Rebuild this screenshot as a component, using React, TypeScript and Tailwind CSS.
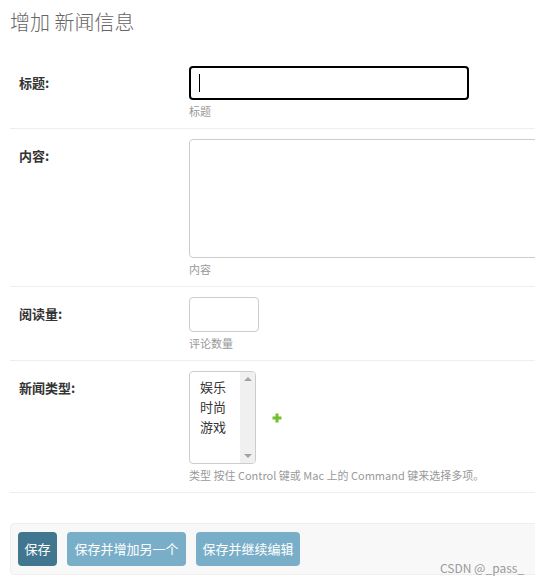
import React from 'react';

const font = { fontFamily: '"Noto Sans CJK SC", "Noto Sans", sans-serif' };

function Row({
  label,
  help,
  children,
}: {
  label: string;
  help: string;
  children: React.ReactNode;
}) {
  return (
    <div className="flex border-b border-[#eeeeee] py-[10px] pl-[9px]">
      <div className="w-[170px] shrink-0 pt-[9px] text-[13px] font-bold leading-[16px] text-[#333333]">
        {label}
      </div>
      <div className="flex flex-col">
        {children}
        <div className="mt-[4px] text-[11px] leading-[14px] text-[#999999]">{help}</div>
      </div>
    </div>
  );
}

function PlusIcon() {
  return (
    <svg width="10" height="10" viewBox="0 0 10 10">
      <path d="M5 0.5v9M0.5 5h9" stroke="#70bf2b" strokeWidth="3" />
    </svg>
  );
}

export default function App() {
  const options = ['娱乐', '时尚', '游戏'];

  return (
    <div className="relative h-[584px] w-[535px] overflow-hidden bg-white" style={font}>
      <h1 className="pl-[10px] pt-[10px] text-[20px] font-light leading-[24px] text-[#666666]">
        增加 新闻信息
      </h1>

      <div className="ml-[10px] mt-[22px] w-[700px]">
        <Row label="标题:" help="标题">
          <div className="flex h-[34px] w-[280px] items-center rounded-[4px] border-2 border-black bg-white pl-[8px]">
            <div className="h-[18px] w-px bg-black" />
          </div>
        </Row>

        <Row label="内容:" help="内容">
          <div className="h-[119px] w-[610px] rounded-[4px] border border-[#cccccc] bg-white" />
        </Row>

        <Row label="阅读量:" help="评论数量">
          <div className="h-[35px] w-[70px] rounded-[4px] border border-[#cccccc] bg-white" />
        </Row>

        <Row label="新闻类型:" help="类型 按住 Control 键或 Mac 上的 Command 键来选择多项。">
          <div className="flex items-center">
            <div className="flex h-[93px] w-[67px] overflow-hidden rounded-[4px] border border-[#cccccc] bg-white">
              <div className="flex-1 pl-[10px] pt-[5px]">
                {options.map((o) => (
                  <div key={o} className="text-[13px] leading-[20px] text-[#333333]">
                    {o}
                  </div>
                ))}
              </div>
              <div className="flex w-[15px] flex-col items-center justify-between bg-[#f0f0f0] py-[5px]">
                <div className="h-0 w-0 border-x-[4px] border-b-[4px] border-x-transparent border-b-[#a3a3a3]" />
                <div className="h-0 w-0 border-x-[4px] border-t-[4px] border-x-transparent border-t-[#a3a3a3]" />
              </div>
            </div>
            <div className="ml-[16px]">
              <PlusIcon />
            </div>
          </div>
        </Row>

        <div className="mt-[30px] flex gap-[10px] rounded-[4px] border border-[#eeeeee] bg-[#f8f8f8] px-[7px] py-[8px]">
          <button className="h-[34px] w-[39px] rounded-[4px] bg-[#417690] text-[13px] text-white">
            保存
          </button>
          <button className="h-[34px] w-[119px] rounded-[4px] bg-[#79aec8] text-[13px] text-white">
            保存并增加另一个
          </button>
          <button className="h-[34px] w-[104px] rounded-[4px] bg-[#79aec8] text-[13px] text-white">
            保存并继续编辑
          </button>
        </div>
      </div>

      <div className="absolute left-[440px] top-[561px] text-[12px] leading-[14px] text-[#9a9a9a]">
        CSDN @_pass_
      </div>
    </div>
  );
}
